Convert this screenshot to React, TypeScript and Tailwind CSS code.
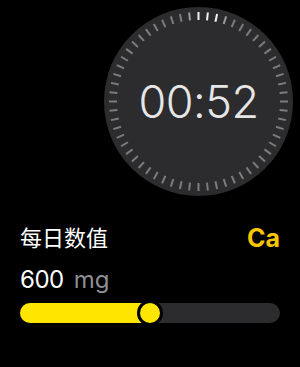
import React from 'react';

const TICKS = Array.from({ length: 60 }, (_, i) => i);

function tickColor(i: number): string {
  if (i <= 2) return '#f0f0f0';
  if (i === 3 || i === 59) return '#9a9a9a';
  return '#7c7c7e';
}

function Dial() {
  const size = 189;
  const c = size / 2;
  const outer = c - 5;
  const inner = outer - 8;
  return (
    <div className="relative w-[189px] h-[189px] rounded-full bg-[#2c2c2e] flex items-center justify-center">
      <svg className="absolute inset-0" width={size} height={size} viewBox={`0 0 ${size} ${size}`}>
        {TICKS.map(i => {
          const a = (i / 60) * Math.PI * 2;
          const sx = Math.sin(a);
          const sy = -Math.cos(a);
          return (
            <line
              key={i}
              x1={c + sx * inner}
              y1={c + sy * inner}
              x2={c + sx * outer}
              y2={c + sy * outer}
              stroke={tickColor(i)}
              strokeWidth={2}
            />
          );
        })}
      </svg>
      <span
        className="relative text-[45px] leading-none font-light text-[#e6e6e6] tracking-[-0.5px]"
        style={{ fontFamily: 'Inter, "Liberation Sans", sans-serif' }}
      >
        00:52
      </span>
    </div>
  );
}

export default function App() {
  return (
    <div
      className="w-[300px] h-[367px] bg-black text-white flex flex-col overflow-hidden"
      style={{ fontFamily: 'Inter, "Noto Sans CJK SC", sans-serif' }}
    >
      <div className="flex justify-end pt-[7px] pr-[7px]">
        <Dial />
      </div>

      <div className="px-5 mt-[28px] flex flex-col">
        <div className="flex items-center justify-between h-[28px]">
          <span className="text-[22px] leading-[28px] font-normal text-white">每日数值</span>
          <span className="text-[25px] leading-[28px] font-bold text-[#f7c600]">Ca</span>
        </div>
        <div className="mt-[16px] flex items-baseline gap-[10px] leading-none">
          <span className="text-[24px] text-white tracking-[-0.5px]">600</span>
          <span className="text-[24px] text-[#8e8e93]">mg</span>
        </div>
        <div className="mt-[11px] relative h-[20px] w-[260px] rounded-full bg-[#2c2c2e]">
          <div className="absolute left-0 top-0 h-[20px] w-[132px] rounded-full bg-[#ffe600]" />
          <div className="absolute left-[117px] top-[-3px] w-[26px] h-[26px] rounded-full bg-[#ffe600] border-[3px] border-black" />
        </div>
      </div>
    </div>
  );
}
